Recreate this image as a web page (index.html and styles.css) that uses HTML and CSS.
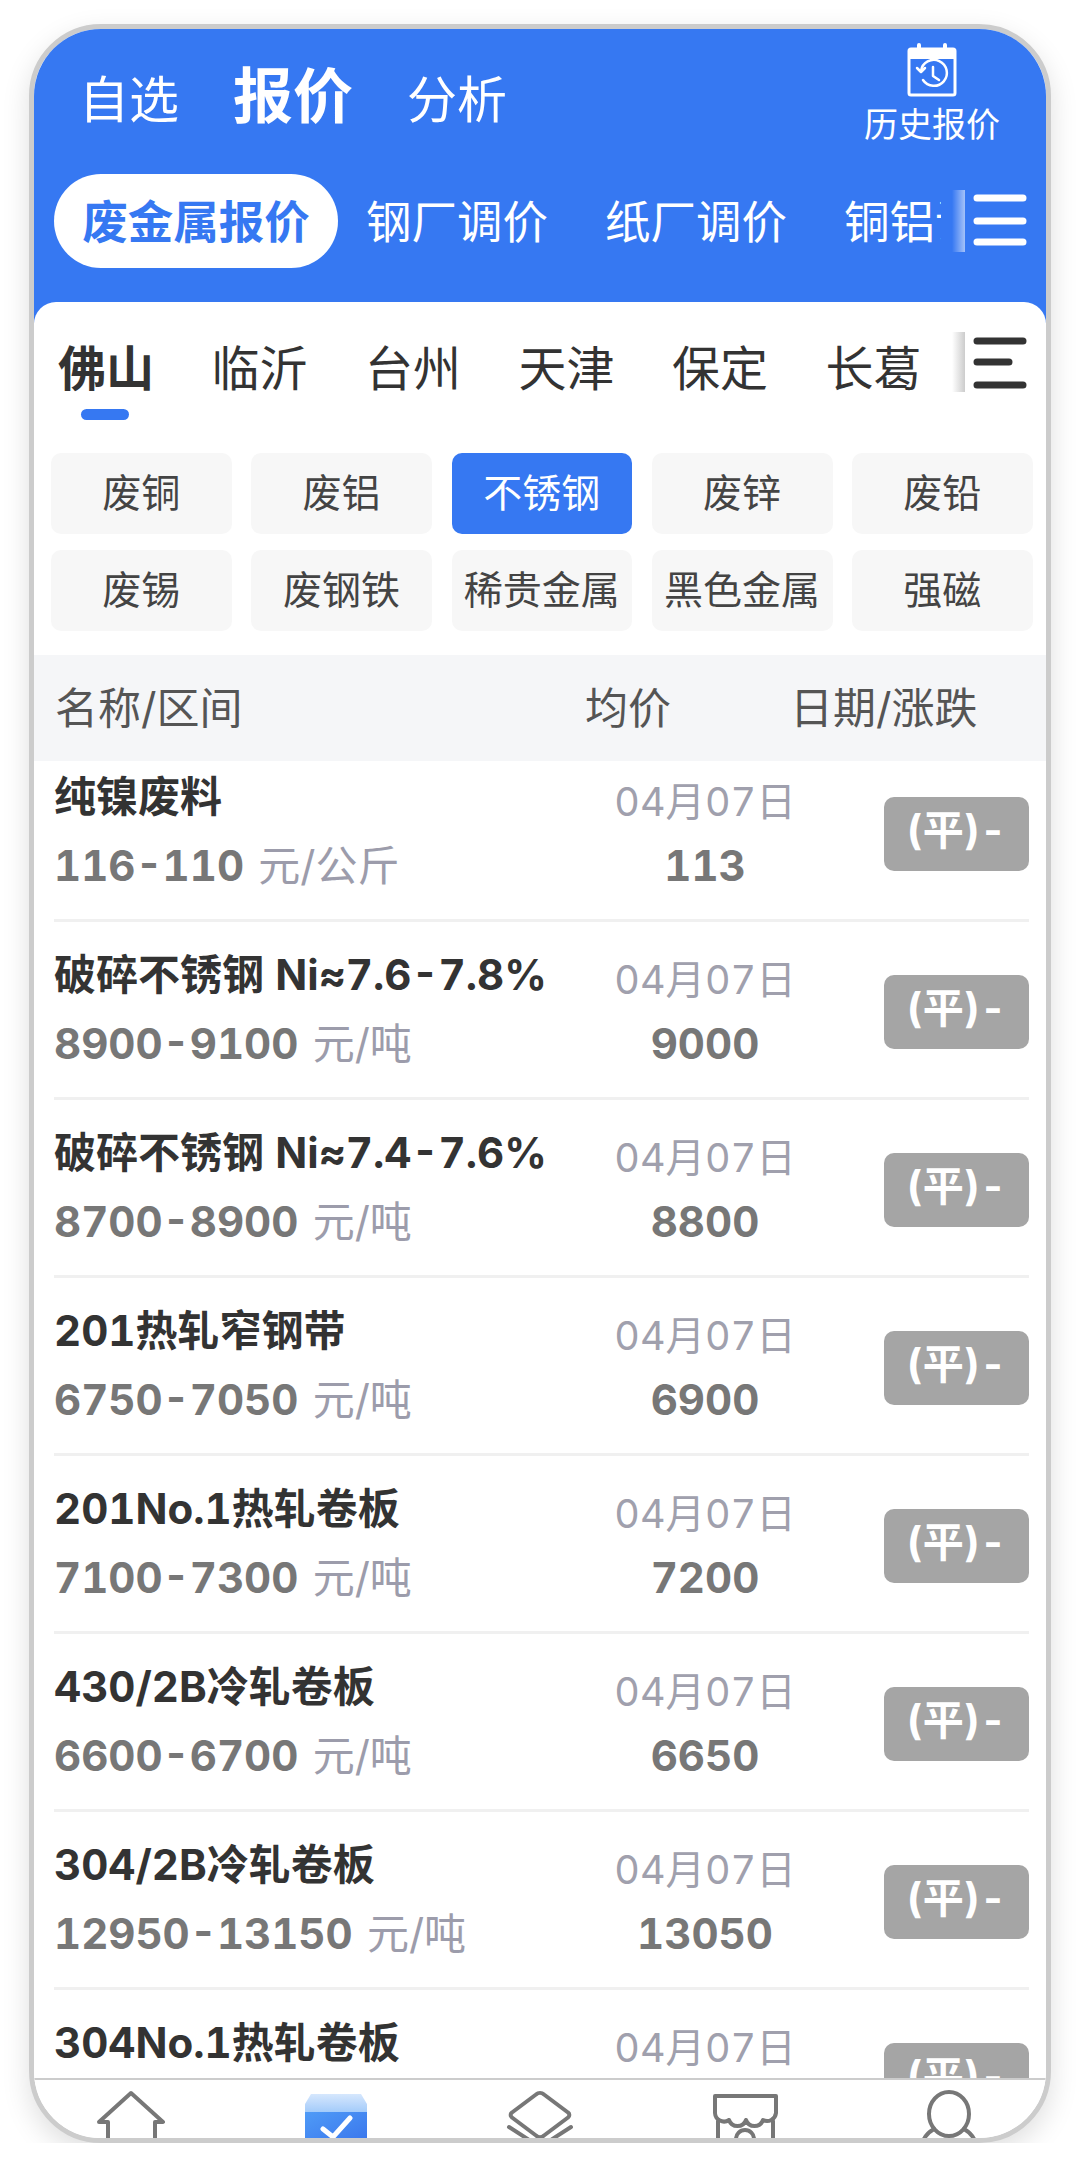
FILE: index.html
```html
<!DOCTYPE html>
<html lang="zh-CN">
<head>
    <meta charset="UTF-8">
    <title>报价</title>
    <link rel="stylesheet" href="styles.css">
</head>
<body>
    <div class="phone">
        <header class="top">
            <div class="top-bar">
                <nav class="main-tabs">
                    <span>自选</span>
                    <span class="main-active">报价</span>
                    <span>分析</span>
                </nav>
                <div class="history">
                    <svg class="history-icon" viewBox="0 0 50 54" fill="none" stroke="#fff" stroke-linecap="round" stroke-linejoin="round">
                        <path d="M2 8a2 2 0 0 1 2-2h42a2 2 0 0 1 2 2v42a2 2 0 0 1-2 2H4a2 2 0 0 1-2-2z" stroke-width="3"/>
                        <path d="M2 7h46v8H2z" fill="#fff" stroke-width="2"/>
                        <path d="M12 2v9M38 2v9" stroke-width="4"/>
                        <path d="M14 28a13 13 0 1 1 2 9" stroke-width="2.5"/>
                        <path d="M10 25l4 4 4-4" stroke-width="2.5"/>
                        <path d="M26 24v9l6 4" stroke-width="2.5"/>
                    </svg>
                    <span>历史报价</span>
                </div>
            </div>
            <div class="cat-bar">
                <div class="cat-scroll">
                    <span class="cat cat-active">废金属报价</span>
                    <span class="cat">钢厂调价</span>
                    <span class="cat">纸厂调价</span>
                    <span class="cat">铜铝调价</span>
                </div>
                <div class="fade fade-blue"></div>
                <svg class="menu-icon" viewBox="0 0 54 54" stroke="#fff" stroke-width="7" stroke-linecap="round">
                    <path d="M4 4h46M4 27h46M4 48h46"/>
                </svg>
            </div>
        </header>

        <main class="panel">
            <div class="city-bar">
                <div class="city-scroll">
                    <span class="city city-active">佛山</span>
                    <span class="city">临沂</span>
                    <span class="city">台州</span>
                    <span class="city">天津</span>
                    <span class="city">保定</span>
                    <span class="city">长葛</span>
                </div>
                <div class="fade fade-gray"></div>
                <svg class="menu-icon menu-dark" viewBox="0 0 54 54" stroke="#333" stroke-width="7" stroke-linecap="round">
                    <path d="M4 4h46M4 25h32M4 48h46"/>
                </svg>
            </div>

            <div class="chips">
                <span class="chip">废铜</span>
                <span class="chip">废铝</span>
                <span class="chip chip-active">不锈钢</span>
                <span class="chip">废锌</span>
                <span class="chip">废铅</span>
                <span class="chip">废锡</span>
                <span class="chip">废钢铁</span>
                <span class="chip">稀贵金属</span>
                <span class="chip">黑色金属</span>
                <span class="chip">强磁</span>
            </div>

            <div class="table-head">
                <span class="head-name">名称/区间</span>
                <span class="head-avg">均价</span>
                <span class="head-date">日期/涨跌</span>
            </div>

            <div class="list">
                <div class="list-inner">
                    <div class="row">
                        <div>
                            <div class="name">纯镍废料</div>
                            <div class="range">116-110 <small>元/公斤</small></div>
                        </div>
                        <div class="mid"><div class="date">04月07日</div><div class="avg">113</div></div>
                        <div class="badge">(平)-</div>
                    </div>
                    <div class="row">
                        <div>
                            <div class="name">破碎不锈钢 Ni≈7.6-7.8%</div>
                            <div class="range">8900-9100 <small>元/吨</small></div>
                        </div>
                        <div class="mid"><div class="date">04月07日</div><div class="avg">9000</div></div>
                        <div class="badge">(平)-</div>
                    </div>
                    <div class="row">
                        <div>
                            <div class="name">破碎不锈钢 Ni≈7.4-7.6%</div>
                            <div class="range">8700-8900 <small>元/吨</small></div>
                        </div>
                        <div class="mid"><div class="date">04月07日</div><div class="avg">8800</div></div>
                        <div class="badge">(平)-</div>
                    </div>
                    <div class="row">
                        <div>
                            <div class="name">201热轧窄钢带</div>
                            <div class="range">6750-7050 <small>元/吨</small></div>
                        </div>
                        <div class="mid"><div class="date">04月07日</div><div class="avg">6900</div></div>
                        <div class="badge">(平)-</div>
                    </div>
                    <div class="row">
                        <div>
                            <div class="name">201No.1热轧卷板</div>
                            <div class="range">7100-7300 <small>元/吨</small></div>
                        </div>
                        <div class="mid"><div class="date">04月07日</div><div class="avg">7200</div></div>
                        <div class="badge">(平)-</div>
                    </div>
                    <div class="row">
                        <div>
                            <div class="name">430/2B冷轧卷板</div>
                            <div class="range">6600-6700 <small>元/吨</small></div>
                        </div>
                        <div class="mid"><div class="date">04月07日</div><div class="avg">6650</div></div>
                        <div class="badge">(平)-</div>
                    </div>
                    <div class="row">
                        <div>
                            <div class="name">304/2B冷轧卷板</div>
                            <div class="range">12950-13150 <small>元/吨</small></div>
                        </div>
                        <div class="mid"><div class="date">04月07日</div><div class="avg">13050</div></div>
                        <div class="badge">(平)-</div>
                    </div>
                    <div class="row">
                        <div>
                            <div class="name">304No.1热轧卷板</div>
                            <div class="range">8000-8200 <small>元/吨</small></div>
                        </div>
                        <div class="mid"><div class="date">04月07日</div><div class="avg">8100</div></div>
                        <div class="badge">(平)-</div>
                    </div>
                </div>
            </div>
        </main>

        <footer class="tabbar">
            <svg viewBox="0 0 80 60" fill="none" stroke="#777" stroke-width="4" stroke-linejoin="round" stroke-linecap="round">
                <path d="M17 64V43H8L40 14l32 29H64v21"/>
            </svg>
            <svg viewBox="0 0 80 60">
                <defs>
                    <linearGradient id="boxTop" x1="0" y1="0" x2="0" y2="1">
                        <stop offset="0" stop-color="#d6e7fd"/>
                        <stop offset="1" stop-color="#a3cbfa"/>
                    </linearGradient>
                    <linearGradient id="boxBody" x1="0" y1="0" x2="1" y2="1">
                        <stop offset="0" stop-color="#4f9bf7"/>
                        <stop offset="1" stop-color="#3a76ec"/>
                    </linearGradient>
                </defs>
                <path d="M15 15h50l6 10v8H9v-8z" fill="url(#boxTop)"/>
                <path d="M9 33h62v30H9z" fill="url(#boxBody)"/>
                <path d="M27 50l10 8 17-19" fill="none" stroke="#fff" stroke-width="5" stroke-linecap="round" stroke-linejoin="round"/>
            </svg>
            <svg viewBox="0 0 80 60" fill="none" stroke="#777" stroke-width="4" stroke-linejoin="round" stroke-linecap="round">
                <path d="M36 15.500a6 6 0 0 1 8 0l24 18a3 3 0 0 1 0 5l-24 18a6 6 0 0 1-8 0l-24-18a3 3 0 0 1 0-5z"/>
                <path d="M9 48l31 20 31-20"/>
            </svg>
            <svg viewBox="0 0 80 60" fill="none" stroke="#777" stroke-width="4" stroke-linejoin="round" stroke-linecap="round">
                <path d="M10 17h61v17a9 9 0 0 1-13 7 9 9 0 0 1-17 0 9 9 0 0 1-17 0 9 9 0 0 1-14-7z"/>
                <path d="M13 42v22M68 42v22"/>
                <path d="M31 64v-4a9 9 0 0 1 18 0v4"/>
            </svg>
            <svg viewBox="0 0 80 60" fill="none" stroke="#777" stroke-width="4" stroke-linejoin="round" stroke-linecap="round">
                <ellipse cx="40" cy="35" rx="20" ry="22"/>
                <path d="M25 50C18 54 14 60 13 66M55 50c7 4 11 10 12 16"/>
            </svg>
        </footer>
    </div>
</body>
</html>
```

FILE: styles.css
```css
* {
    box-sizing: border-box;
}

body {
    margin: 0;
    background: #fff;
    font-family: Inter, "Noto Sans CJK SC", "Noto Sans", sans-serif;
    font-variant-numeric: tabular-nums;
}

.phone {
    display: flex;
    flex-direction: column;
    width: 1022px;
    height: 2119px;
    margin: 24px 0 0 29px;
    border: 5px solid #ccc;
    border-radius: 72px;
    background: #fff;
    overflow: hidden;
    box-shadow: 0 10px 28px rgba(0, 0, 0, 0.13);
}

/* blue header */
.top {
    flex: none;
    height: 294px;
    background: #3678f2;
    color: #fff;
}

.top-bar {
    display: flex;
    justify-content: space-between;
    height: 145px;
    padding: 0 46px 0 45px;
}

.main-tabs {
    display: flex;
    align-items: center;
    gap: 54px;
    margin-bottom: 4px;
    font-size: 50px;
    line-height: 60px;
}

.main-active {
    font-size: 60px;
    font-weight: 700;
    margin-top: -8px;
}

.history {
    display: flex;
    flex-direction: column;
    align-items: center;
    padding-top: 14px;
    font-size: 34px;
    line-height: 44px;
}

.history-icon {
    width: 50px;
    height: 54px;
    margin-bottom: 6px;
}

.cat-bar {
    display: flex;
    align-items: center;
    height: 94px;
}

.cat-scroll {
    display: flex;
    align-items: center;
    gap: 57px;
    width: 907px;
    padding-left: 20px;
    overflow: hidden;
    white-space: nowrap;
    font-size: 45.500px;
}

.cat {
    flex: none;
    height: 94px;
    padding-top: 3px;
    line-height: 91px;
}

.cat-active {
    width: 284px;
    margin-right: -29px;
    border-radius: 47px;
    background: #fff;
    color: #3678f2;
    font-weight: 700;
    text-align: center;
}

.fade {
    flex: none;
    width: 13px;
    height: 62px;
    margin-left: 11px;
}

.fade-blue {
    background: linear-gradient(to right, rgba(255, 255, 255, 0), rgba(255, 255, 255, 0.55));
}

.fade-gray {
    height: 60px;
    margin-top: 30px;
    margin-left: 7px;
    background: linear-gradient(to right, rgba(255, 255, 255, 0), #ccc);
}

.menu-icon {
    flex: none;
    width: 54px;
    height: 54px;
    margin-left: 8px;
}

/* white panel */
.panel {
    flex: 1;
    display: flex;
    flex-direction: column;
    min-height: 0;
    margin-top: -21px;
    border-radius: 22px 22px 0 0;
    background: #fff;
    overflow: hidden;
}

.city-bar {
    display: flex;
    flex: none;
    height: 151px;
}

.city-scroll {
    display: flex;
    gap: 57.500px;
    width: 911px;
    padding: 37px 0 0 24px;
    overflow: hidden;
    font-size: 48px;
    line-height: 60px;
    color: #333;
}

.city {
    flex: none;
    position: relative;
    height: 84px;
}

.city-active {
    font-weight: 700;
}

.city-active::after {
    content: "";
    position: absolute;
    left: 23px;
    bottom: 3px;
    width: 48px;
    height: 11px;
    border-radius: 6px;
    background: #3678f2;
}

.menu-dark {
    margin-top: 35px;
}

.chips {
    display: grid;
    flex: none;
    grid-template-columns: repeat(5, 180.750px);
    grid-auto-rows: 81px;
    column-gap: 19.500px;
    row-gap: 16px;
    padding-left: 17px;
}

.chip {
    display: flex;
    align-items: center;
    justify-content: center;
    padding-bottom: 8px;
    border-radius: 10px;
    background: #f7f7f7;
    font-size: 39px;
    color: #444;
}

.chip-active {
    background: #3678f2;
    color: #fff;
}

.table-head {
    display: flex;
    flex: none;
    align-items: center;
    height: 106px;
    margin-top: 24px;
    padding: 0 0 6px 21px;
    background: #f5f6f8;
    font-size: 43px;
    color: #555;
}

.head-name {
    width: 530px;
}

.head-avg {
    width: 205px;
}

.list {
    flex: 1;
    min-height: 0;
    overflow: hidden;
}

/* the list is scrolled a little under the table head */
.list-inner {
    margin: -17px 17px 0 20px;
}

.row {
    display: grid;
    grid-template-columns: 1fr 210px 219px;
    height: 178px;
    padding-top: 24px;
    border-bottom: 3px solid #f0f0f0;
}

.name {
    font-size: 42px;
    font-weight: 700;
    line-height: 58px;
    color: #333;
    white-space: nowrap;
}

.range {
    margin-top: 11px;
    font-size: 42px;
    font-weight: 700;
    line-height: 58px;
    color: #777;
    white-space: nowrap;
}

.range small {
    margin-left: 3px;
    font-size: 42px;
    font-weight: 400;
    color: #9c9cab;
}

.mid {
    text-align: center;
}

.date {
    margin-top: 5px;
    font-size: 39.500px;
    line-height: 58px;
    color: #a0a0ad;
}

.avg {
    margin-top: 6px;
    font-size: 42px;
    font-weight: 700;
    line-height: 58px;
    color: #777;
}

.badge {
    justify-self: end;
    width: 145px;
    height: 74px;
    margin-top: 29px;
    border-radius: 10px;
    background: #a5a5a5;
    color: #fff;
    font-size: 41px;
    font-weight: 700;
    line-height: 67px;
    text-align: center;
}

/* bottom tabs, cut off by the frame */
.tabbar {
    display: grid;
    flex: none;
    grid-template-columns: repeat(5, 204.500px);
    justify-content: center;
    justify-items: center;
    height: 60px;
    border-top: 2px solid #ccc;
    background: #fff;
    overflow: hidden;
}

.tabbar svg {
    display: block;
    width: 80px;
    height: 60px;
    margin-top: -1px;
    overflow: hidden;
}
```
